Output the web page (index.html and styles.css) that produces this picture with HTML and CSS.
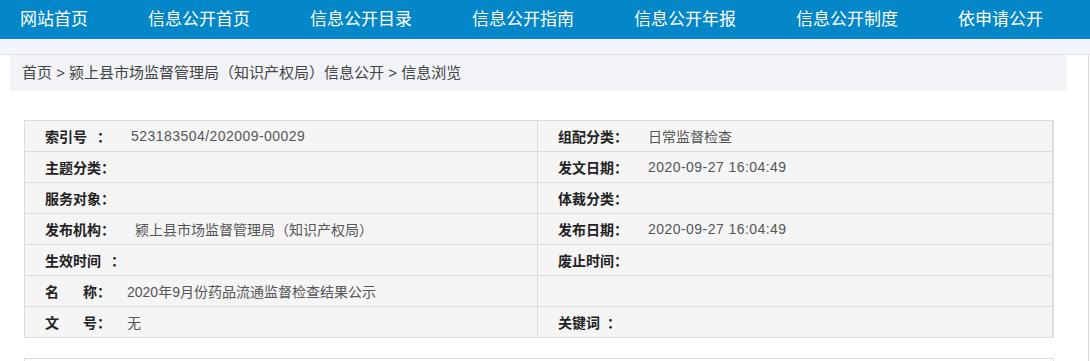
FILE: index.html
```html
<!DOCTYPE html>
<html lang="zh-CN">
<head>
<meta charset="utf-8">
<title>信息浏览</title>
<link rel="stylesheet" href="styles.css">
</head>
<body>
<nav class="nav">
  <a class="nav-item">网站首页</a>
  <a class="nav-item">信息公开首页</a>
  <a class="nav-item">信息公开目录</a>
  <a class="nav-item">信息公开指南</a>
  <a class="nav-item">信息公开年报</a>
  <a class="nav-item">信息公开制度</a>
  <a class="nav-item">依申请公开</a>
</nav>
<div class="band"></div>
<main class="wrap">
  <div class="crumb">首页 &gt; 颍上县市场监督管理局（知识产权局）信息公开 &gt; 信息浏览</div>
  <div class="meta">
    <div class="cell"><span class="lbl">索引号<span class="gap"></span>：</span><span class="val num">523183504/202009-00029</span></div>
    <div class="cell"><span class="lbl">组配分类：</span><span class="val">日常监督检查</span></div>
    <div class="cell"><span class="lbl">主题分类：</span></div>
    <div class="cell"><span class="lbl">发文日期：</span><span class="val num">2020-09-27 16:04:49</span></div>
    <div class="cell"><span class="lbl">服务对象：</span></div>
    <div class="cell"><span class="lbl">体裁分类：</span></div>
    <div class="cell"><span class="lbl">发布机构：</span><span class="val">颍上县市场监督管理局（知识产权局）</span></div>
    <div class="cell"><span class="lbl">发布日期：</span><span class="val num">2020-09-27 16:04:49</span></div>
    <div class="cell"><span class="lbl">生效时间<span class="gap"></span>：</span></div>
    <div class="cell"><span class="lbl">废止时间：</span></div>
    <div class="cell"><span class="lbl">名<span class="sp"></span>称：</span><span class="val val-s">2020年9月份药品流通监督检查结果公示</span></div>
    <div class="cell"></div>
    <div class="cell"><span class="lbl">文<span class="sp"></span>号：</span><span class="val val-s">无</span></div>
    <div class="cell"><span class="lbl">关键词<span class="gap gap-s"></span>：</span></div>
  </div>
  <div class="content"></div>
</main>
</body>
</html>
```

FILE: styles.css
```css
html, body {
  margin: 0;
  padding: 0;
  background: #ffffff;
}
body {
  width: 1090px;
  overflow: hidden;
  font-family: "Liberation Sans", "Noto Sans CJK SC", sans-serif;
}
.nav {
  height: 39px;
  background: #0387c8;
  display: flex;
  gap: 60px;
  padding-left: 20px;
  align-items: center;
}
.nav-item {
  color: #ffffff;
  font-size: 17px;
  line-height: 39px;
  white-space: nowrap;
}
.band {
  height: 15px;
  background: #f2f6fa;
  border-bottom: 1px solid #dde2e6;
}
.wrap {
  width: 1088px;
  border-right: 1px solid #dcdfe2;
  padding-bottom: 10px;
}
.crumb {
  margin-left: 10px;
  width: 1045px;
  height: 36px;
  padding-left: 12px;
  background: #f1f3f6;
  color: #444444;
  font-size: 15px;
  line-height: 36px;
  white-space: nowrap;
}
.meta {
  margin: 29px 0 0 24px;
  width: 1028px;
  display: grid;
  grid-template-columns: 512px 514px;
  grid-auto-rows: 30px;
  gap: 1px;
  padding: 1px;
  background: #dcdcdc;
}
.cell {
  background: #f5f5f5;
  padding-left: 20px;
  display: flex;
  align-items: center;
  font-size: 14px;
  white-space: nowrap;
}
.lbl {
  font-weight: bold;
  color: #222222;
}
.gap {
  display: inline-block;
  width: 10px;
}
.gap-s {
  width: 7px;
}
.sp {
  display: inline-block;
  width: 24px;
}
.val {
  color: #555555;
  margin-left: 20px;
}
.num {
  letter-spacing: 0.45px;
}
.val-s {
  margin-left: 16px;
}
.content {
  margin: 20px 0 0 24px;
  width: 1028px;
  height: 40px;
  border: 1px solid #dcdcdc;
}
```
